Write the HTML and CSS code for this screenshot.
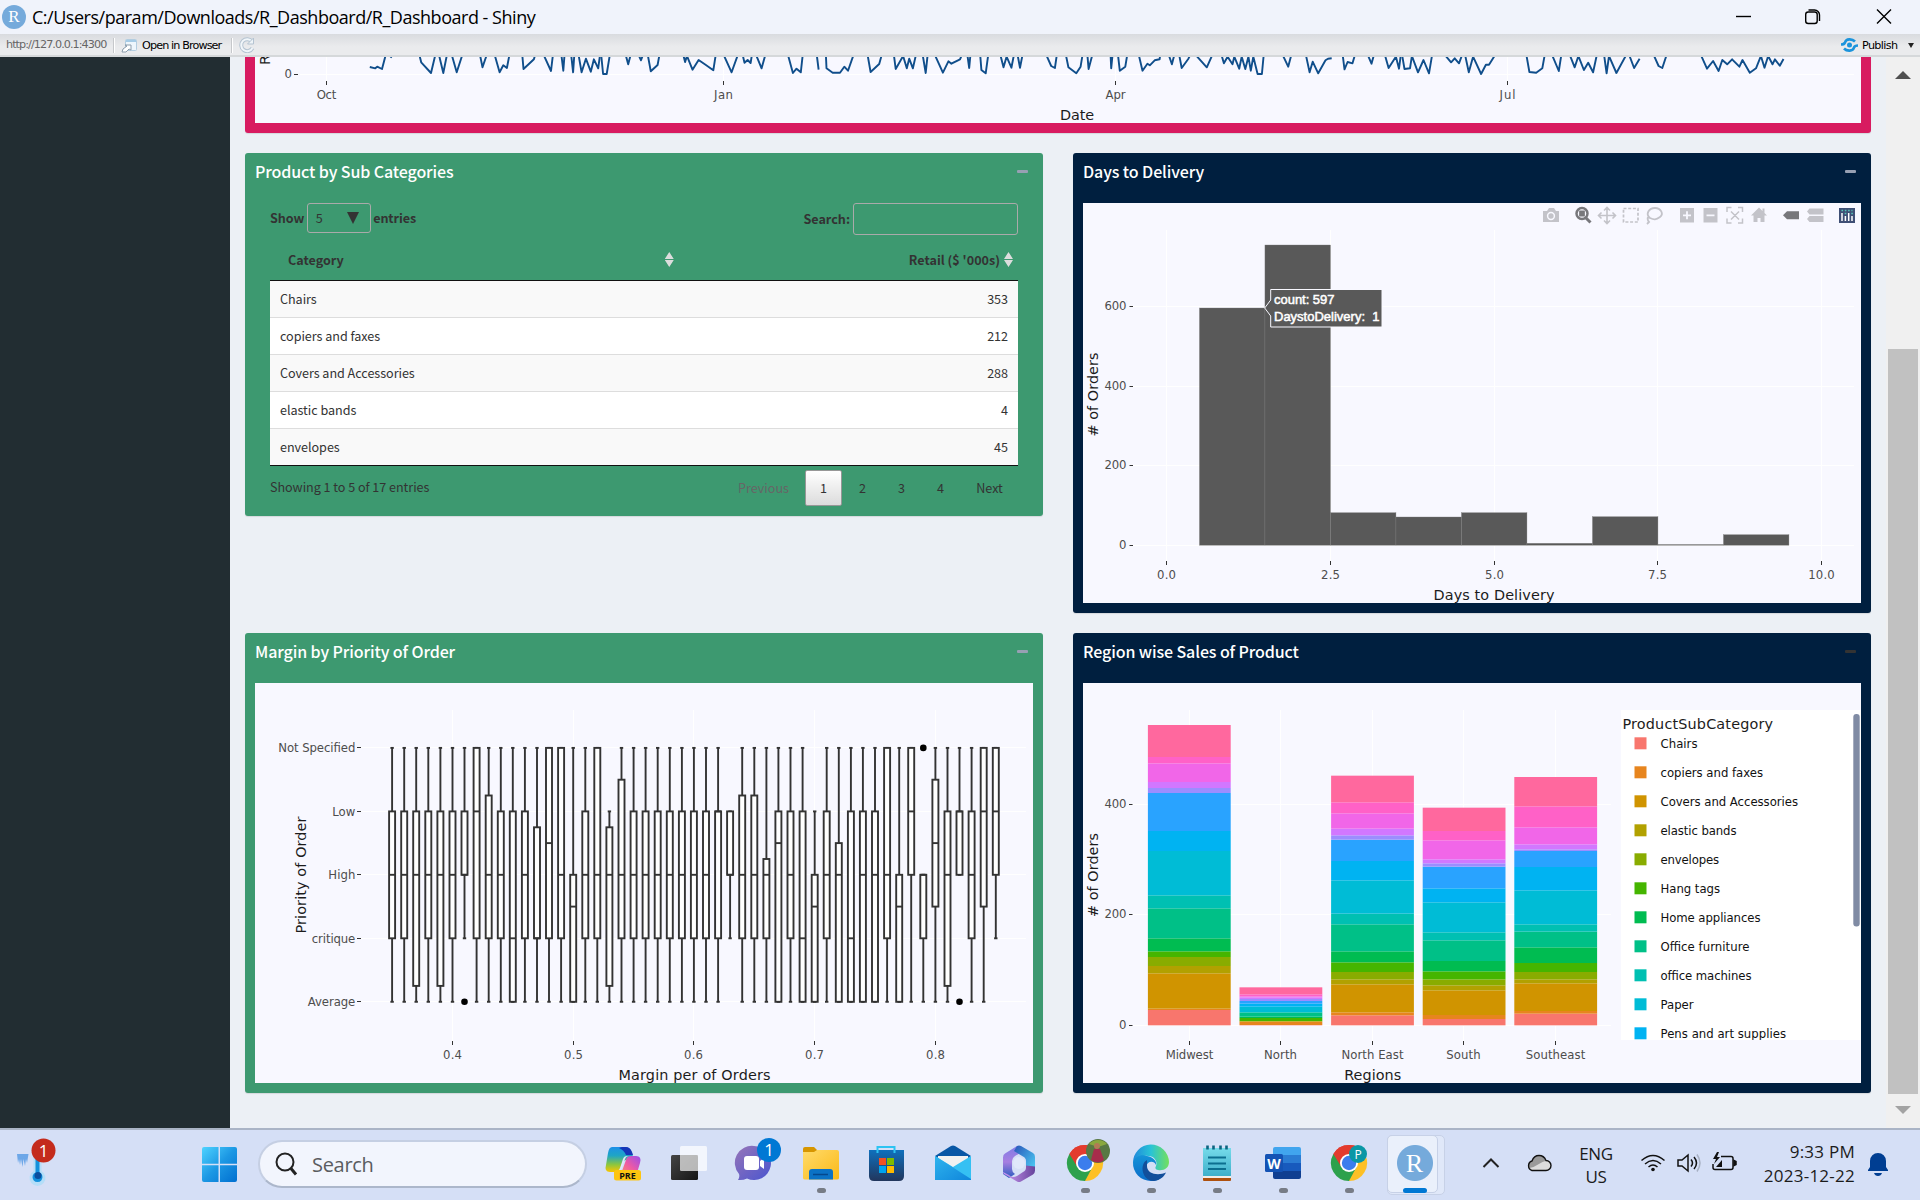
FILE: index.html
```html
<!DOCTYPE html>
<html lang="en">
<head>
<meta charset="utf-8">
<title>R_Dashboard - Shiny</title>
<link rel="stylesheet" href="styles.css">
</head>
<body>
<header class="titlebar">
  <span class="r-logo">R</span>
  <span class="window-title">C:/Users/param/Downloads/R_Dashboard/R_Dashboard - Shiny</span>
  <svg class="window-controls" width="184" height="34" fill="none" stroke="#000" stroke-width="1.4">
    <path d="M0 16.5H15"/>
    <rect x="69.700" y="12" width="11.500" height="11.500" rx="2.500"/><path d="M72.500 10h6a5 5 0 0 1 5 5v6"/>
    <path d="M141 9.500l14 14M155 9.500l-14 14"/>
  </svg>
</header>
<div class="toolbar">
  <span class="address">http://127.0.0.1:4300</span>
  <i class="divider"></i>
  <svg class="open-icon" width="17" height="15"><rect x="4.500" y="1.500" width="11" height="11" rx="1" fill="#eef6fc" stroke="#b3cde0"/><path d="M5 3h10" stroke="#a5cbe6" stroke-width="2"/><path d="M1 14l1-3 4-3-2-1h6v5l-2-1-3 3z" fill="#fff" stroke="#8b9cab"/></svg>
  <span class="open-label">Open in Browser</span>
  <i class="divider"></i>
  <svg class="reload-icon" width="16" height="16" fill="none"><path d="M13 4.500A6 6 0 1 0 13.500 11" stroke="#b4c3d1" stroke-width="4"/><path d="M13 4.500A6 6 0 1 0 13.500 11" stroke="#f1f6fa" stroke-width="2"/><path d="M14.500 1v6h-6z" fill="#eef4f8" stroke="#b4c3d1"/></svg>
  <span class="spacer"></span>
  <svg class="publish-icon" width="17" height="14" fill="none" stroke="#1c94dc" stroke-width="2.600"><path d="M14 3.500C11 .5 5 .5 4 4.500c-.5 1.500-2 2-4 2M3 10.500c3 3 9 3 10-1 .5-1.500 2-2 4-2"/><circle cx="8.500" cy="7" r="2.500" fill="#1c94dc" stroke="none"/></svg>
  <span class="publish-label">Publish</span>
  <i class="caret"></i>
</div>

<main class="viewport">
  <aside class="sidebar"></aside>
  <section class="content">
    <div class="box pink"><svg id="timeline" width="1606" height="66"></svg></div>
    <div class="grid">
      <article class="box green table-box">
        <h3>Product by Sub Categories <i class="collapse"></i></h3>
        <div class="table-wrap">
          <div class="controls">
            <label>Show <span class="select">5 <i></i></span> entries</label>
            <label>Search: <span class="search-input"></span></label>
          </div>
          <div class="thead"><b>Category</b><i class="sort first"></i><b class="retail">Retail ($ '000s)</b><i class="sort"></i></div>
          <div class="tbody">
            <div class="row"><span>Chairs</span><span>353</span></div>
            <div class="row"><span>copiers and faxes</span><span>212</span></div>
            <div class="row"><span>Covers and Accessories</span><span>288</span></div>
            <div class="row"><span>elastic bands</span><span>4</span></div>
            <div class="row"><span>envelopes</span><span>45</span></div>
          </div>
          <div class="footer">
            <span class="info">Showing 1 to 5 of 17 entries</span>
            <nav class="pager"><span class="word disabled">Previous</span><span class="current">1</span><span>2</span><span>3</span><span>4</span><span class="word next">Next</span></nav>
          </div>
        </div>
      </article>
      <article class="box navy">
        <h3>Days to Delivery <i class="collapse"></i></h3>
        <svg id="histogram" class="plot" width="778" height="400"></svg>
      </article>
      <article class="box green">
        <h3>Margin by Priority of Order <i class="collapse"></i></h3>
        <svg id="boxplot" class="plot" width="778" height="400"></svg>
      </article>
      <article class="box navy">
        <h3>Region wise Sales of Product <i class="collapse dark"></i></h3>
        <svg id="stacked" class="plot" width="778" height="400"></svg>
      </article>
    </div>
  </section>
  <div class="scrollbar"><i class="up"></i><i class="thumb"></i><i class="down"></i></div>
</main>

<footer class="taskbar">
  <svg width="0" height="0" class="defs">
    <defs>
      <linearGradient id="win" x1="0" y1="0" x2="1" y2="1"><stop offset="0" stop-color="#4fd3ff"/><stop offset=".5" stop-color="#1c98e4"/><stop offset="1" stop-color="#006fd0"/></linearGradient>
      <linearGradient id="cpA" x1="0" y1="0" x2="0" y2="1"><stop offset="0" stop-color="#1c8fe8"/><stop offset=".35" stop-color="#1fa6c4"/><stop offset=".7" stop-color="#8bc63f"/><stop offset="1" stop-color="#fbc500"/></linearGradient>
      <linearGradient id="cpB" x1="1" y1="0" x2="0" y2="1"><stop offset="0" stop-color="#9a4dea"/><stop offset=".5" stop-color="#ee5aa4"/><stop offset="1" stop-color="#ff9a5c"/></linearGradient>
      <linearGradient id="dark" x1="0" y1="0" x2="1" y2="1"><stop offset="0" stop-color="#444"/><stop offset="1" stop-color="#161616"/></linearGradient>
      <linearGradient id="chat" x1="0" y1="0" x2="1" y2="1"><stop offset="0" stop-color="#9775b8"/><stop offset="1" stop-color="#4a55cf"/></linearGradient>
      <linearGradient id="fold" x1="0" y1="0" x2="1" y2="1"><stop offset="0" stop-color="#ffdb6b"/><stop offset="1" stop-color="#fbb917"/></linearGradient>
      <linearGradient id="blue" x1="0" y1="0" x2="0" y2="1"><stop offset="0" stop-color="#0f70bd"/><stop offset="1" stop-color="#22365c"/></linearGradient>
      <linearGradient id="mail" x1="0" y1="0" x2="1" y2="1"><stop offset="0" stop-color="#2fb4ee"/><stop offset="1" stop-color="#0f86db"/></linearGradient>
      <linearGradient id="edgeTop" x1="0" y1="0" x2="1" y2="0"><stop offset="0" stop-color="#2089dc"/><stop offset=".5" stop-color="#29c3d6"/><stop offset="1" stop-color="#74e05c"/></linearGradient>
      <linearGradient id="edgeLeft" x1="0" y1="0" x2="0" y2="1"><stop offset="0" stop-color="#1593d8"/><stop offset="1" stop-color="#0b6cc8"/></linearGradient>
      <linearGradient id="note" x1="0" y1="0" x2="0" y2="1"><stop offset="0" stop-color="#76dbea"/><stop offset="1" stop-color="#3fb0cb"/></linearGradient>
      <linearGradient id="mA" x1="0" y1="0" x2="0" y2="1"><stop offset="0" stop-color="#7f7ce6"/><stop offset=".5" stop-color="#a77fe0"/><stop offset="1" stop-color="#2a5cc0"/></linearGradient>
      <linearGradient id="mB" x1="0" y1="0" x2="1" y2="1"><stop offset="0" stop-color="#2a55b8"/><stop offset="1" stop-color="#4fd8fb"/></linearGradient>
      <linearGradient id="mC" x1="0" y1="0" x2="1" y2="0"><stop offset="0" stop-color="#cf9bf5"/><stop offset="1" stop-color="#67449c"/></linearGradient>
      <g id="chrome">
        <path d="M0 0L-15.600-9A18 18 0 0 1 15.600-9z" fill="#e33b2e"/>
        <path d="M0 0L-15.600-9A18 18 0 0 0 0 18z" fill="#2da14c"/>
        <path d="M0 0L15.600-9A18 18 0 0 1 0 18z" fill="#fdc026"/>
        <path d="M0-8.500H15.600L7.400 4.200z" fill="#fdc026"/><path d="M-7.400 4.200L-15.600-9 0-8.500z" fill="#2da14c"/><path d="M0-8.700H15.800A18 18 0 0 0-15.600-9L-7.500 4.200z" fill="#e33b2e"/><path d="M7.400 4.200L0 18 -8 3z" fill="#2da14c"/>
        <circle r="9" fill="#fff"/><circle r="7.200" fill="#3b7ded"/>
      </g>
    </defs>
  </svg>
  <svg class="weather" width="50" height="72">
    <path d="M9 24h11.500l-1.500 9-1-4-1 7-1.500-7-1 8-1.500-8-1 6-1-6-1 4z" fill="#6da7e8"/>
    <path d="M25.500 26v15a8 8 0 1 0 8 0V26a4 4 0 0 0-8 0z" fill="#b5def8"/><path d="M27.500 26v16.500a5 5 0 1 0 4 0V26z" fill="#1491dc"/><circle cx="30" cy="45.500" r="3.500" fill="#0a4f9e"/>
    <circle cx="35.500" cy="20.500" r="12" fill="#c42b1c"/><text x="35.500" y="26.500" text-anchor="middle" class="badge-text">1</text>
  </svg>
  <svg class="start" width="35" height="35" fill="url(#win)"><path d="M2 0h14.500v16.700H0V2a2 2 0 0 1 2-2zM18 0h15a2 2 0 0 1 2 2v14.700H18zM0 18.300h16.500V35H2a2 2 0 0 1-2-2zM18 18.300h17V33a2 2 0 0 1-2 2H18z"/></svg>
  <div class="search"><svg width="24" height="24" fill="none" stroke="#222"><circle cx="11" cy="10" r="8.500" stroke-width="2"/><path d="M17 16.500l5 6" stroke-width="3"/></svg><span>Search</span></div>
  <div class="apps">
    <div class="app"><svg width="66" height="70">
      <path d="M22 17h13q5 0 7 6l2 7h-7q-4 0-5 4l-2 6q-1 2-4 2h-6q-6 0-4-7l2-12q1-6 4-6z" fill="url(#cpA)"/><path d="M32 17h4q4 0 6 5l1 3h-7q-2-5-7-7z" fill="#1536b8"/>
      <path d="M36 30q1-4 5-4h5q6 0 4 7l-3 10q-1 3-4 3H29l3-5z" fill="url(#cpB)"/><path d="M31 40l4-11q1-3 4-3h-2q-3 0-4 3l-3 9q-1 3-4 3h4z" fill="#dfe5ff"/>
      <rect x="24" y="40" width="27" height="10.500" rx="2.500" fill="#fdc510"/><text x="37.500" y="48.700" text-anchor="middle" class="pre">PRE</text></svg></div>
    <div class="app"><svg width="66" height="70"><rect x="15" y="25" width="27" height="25" rx="1.500" fill="url(#dark)"/><rect x="24" y="16" width="27" height="25" rx="1.500" fill="#fff" fill-opacity=".72"/><path d="M24 25h18v16H25.500L24 40z" fill="#aaa" fill-opacity=".35"/></svg></div>
    <div class="app"><svg width="66" height="70"><path d="M32 16a17 17 0 1 1-7 32.500q-4 2-9 1.500 2-3 1-6A17 17 0 0 1 32 16z" fill="url(#chat)"/><rect x="22" y="26" width="15" height="14" rx="3" fill="#fff"/><path d="M38 31l4-3v11l-4-3z" fill="#fff"/><circle cx="47" cy="20" r="12" fill="#0078d4"/><text x="47" y="26" text-anchor="middle" class="badge-text">1</text></svg></div>
    <div class="app running"><svg width="66" height="70"><path d="M15 19q0-2 2-2h9l3 3v5H15z" fill="#d79600"/><path d="M15 22h11l3-2h20q2 0 2 2v26q0 1.500-2 1.500H17q-2 0-2-1.500z" fill="url(#fold)"/><path d="M21 49.500V42q0-3 3-3h18q3 0 3 3v7.500z" fill="#0b72c5"/><path d="M25 44.500h15" stroke="#05488c" stroke-width="1.500"/></svg></div>
    <div class="app"><svg width="66" height="70"><path d="M23.500 23v-6h17v6" fill="none" stroke="#2cc3f2" stroke-width="2"/><path d="M15 20h35v26q0 5-5 5H20q-5 0-5-5z" fill="url(#blue)"/><path d="M23.500 20v3M40.500 20v3" stroke="#2cc3f2" stroke-width="2"/><path d="M25 28h7v7h-7z" fill="#f25022"/><path d="M33 28h7v7h-7z" fill="#7fba00"/><path d="M25 36h7v7h-7z" fill="#00a4ef"/><path d="M33 36h7v7h-7z" fill="#ffb900"/></svg></div>
    <div class="app"><svg width="66" height="70"><path d="M15 26L31 16q2-1 4 0l16 10-18 13z" fill="#0957a5"/><path d="M18 26h30v6L33 42 18 32z" fill="#f1f1f1"/><path d="M15 26l18 11 18-11v24H15z" fill="#35c0f3"/><path d="M15 26l36 23v1H15z" fill="url(#mail)"/></svg></div>
    <div class="app"><svg width="66" height="70">
      <path d="M31 16L19 23.500q-2 1-2 4V44l6 4 6-4q-3-2-3-5V31q0-3 3-5l7-4z" fill="url(#mA)"/>
      <path d="M31 16q2-1 4 0l12 7q2 1 2 4v14l-5 3-4-3V31q0-3-3-4.500L28 21z" fill="url(#mB)"/>
      <path d="M17 42q0 1.500 2 2.500l12 7q2 1 4 0l12-7q2-1.500 2-4v-4l-9-1v2q0 3-3 4.500L31 46q-5 2.500-8-1z" fill="url(#mC)"/>
      <circle cx="33" cy="33" r="6" fill="#e0e8fa"/></svg></div>
    <div class="app running"><svg width="66" height="70"><use href="#chrome" x="33" y="33"/><circle cx="46" cy="21" r="12" fill="#587843"/><path d="M37 14a12 12 0 0 1 18 0l-9 3z" fill="#89a83e"/><circle cx="45" cy="16" r="3" fill="#b27a55"/><path d="M39 30l3-11h6l4 11q-6 5-13 0z" fill="#a82c4b"/></svg></div>
    <div class="app running"><svg width="66" height="70"><path d="M15 33a18 18 0 0 1 36-1c0 6-5 9-11 8q-4-1-2-4c2-5-2-10-8-10-6-1-13 2-15 7z" fill="url(#edgeTop)"/><path d="M15 32c2-6 9-8 14-6 6 1 10 5 9 9-2-5-9-4-10 2-1 8 6 12 16 10-4 4-8 4-11 4a18 18 0 0 1-18-19z" fill="url(#edgeLeft)"/><path d="M29 30c-8 4-5 21 7 21 6-1 10-4 12-8.500-8 3.500-19 1.500-19-6.500z" fill="#124f9b"/></svg></div>
    <div class="app running"><svg width="66" height="70"><path d="M19 46h28v3H19z" fill="#f3eee8"/><path d="M19 48h28v2q0 1-1 1H20q-1 0-1-1z" fill="#ae510f"/><path d="M19 18h28v28H19z" fill="url(#note)"/><path d="M24 27.500h18M24 33.500h18M24 39h18" stroke="#0c6f8f" stroke-width="1.800"/><path d="M23.500 15.500v4M29.500 15.500v4M36.500 15.500v4M42.500 15.500v4" stroke="#0c6480" stroke-width="2.600"/></svg></div>
    <div class="app running"><svg width="66" height="70"><path d="M23 19q0-2 2-2h24q2 0 2 2v6H23z" fill="#41a5ee"/><path d="M23 25h28v8H23z" fill="#2b7cd3"/><path d="M23 33h28v8H23z" fill="#185abd"/><path d="M23 41h28v6q0 2-2 2H25q-2 0-2-2z" fill="#103f91"/><rect x="15" y="24" width="18" height="18" rx="1.500" fill="#1453b4"/><text x="24" y="38.500" text-anchor="middle" class="word-w">W</text></svg></div>
    <div class="app running"><svg width="66" height="70"><use href="#chrome" x="33" y="33"/><circle cx="42" cy="24" r="9" fill="#0a97a5"/><text x="42" y="28.500" text-anchor="middle" class="profile-p">P</text></svg></div>
    <div class="app active"><span class="r-logo large">R</span></div>
  </div>
  <div class="tray">
    <svg class="chevron" width="18" height="12" fill="none" stroke="#222" stroke-width="2"><path d="M1.500 10L9 2.500 16.500 10"/></svg>
    <svg class="cloud" width="26" height="18"><path d="M6 16.500a5 5 0 0 1 0-9.500Q8 1.500 13 1.500t7 5a5 5 0 0 1 0 10z" fill="#dcdcdc" stroke="none"/><path d="M6 7.500Q8 2 13 2t6.500 5l-3 1-9 5-4 1Q1 9 6 7.500z" fill="#9a9a9a"/><path d="M6 16.500a5 5 0 0 1 0-9.500Q8 1.500 13 1.500t7 5a5 5 0 0 1 0 10z" fill="none" stroke="#111" stroke-width="1.400"/></svg>
    <div class="lang">ENG<br>US</div>
    <svg class="wifi" width="26" height="18" fill="none" stroke="#111" stroke-width="1.500"><path d="M1.500 6.500Q13-3.500 24.500 6.500M5 10Q13 3 21 10M8.500 13Q13 9 17.500 13"/><circle cx="13" cy="15.500" r="1.800" fill="#111" stroke="none"/></svg>
    <svg class="speaker" width="25" height="20" fill="none" stroke="#111" stroke-width="1.500"><path d="M1 7h4l6-5v16l-6-5H1zM14 6.500q3 3.500 0 7M17 4q5 6 0 12"/><path d="M20 1.500q6 8.500 0 17" stroke="#a7b0c3"/></svg>
    <svg class="battery" width="26" height="20" fill="none" stroke="#111" stroke-width="1.500"><path d="M9 4.500h10q2 0 2 2v9q0 2-2 2H3q-2 0-2-2V12"/><path d="M22 8.500v5l2-1v-3z" fill="#111"/><path d="M4 15l6-7v7z" fill="#111" stroke="none"/><path d="M5 0L1 7h3L2 12l6-7H5l2-5z" fill="#111" stroke="none"/></svg>
    <div class="clock">9:33 PM<br>2023-12-22</div>
    <svg class="bell" width="20" height="24" fill="#003e92"><path d="M10 0a8 8 0 0 1 8 8v6l2 3v1H0v-1l2-3V8a8 8 0 0 1 8-8zM6 20h8q-1 3-4 3t-4-3z"/></svg>
  </div>
</footer>
<script src="script.js"></script>
</body>
</html>
```
FILE: styles.css
```css
* { box-sizing: border-box; }
body { margin: 0; width: 1920px; height: 1200px; overflow: hidden; display: flex; flex-direction: column; background: #ebeef4; font-family: "Noto Sans CJK SC", sans-serif; color: #333; }
svg { display: block; flex: none; }

.titlebar { height: 34px; flex: none; display: flex; align-items: center; padding-left: 2px; background: #f0f3fb; }
.r-logo { width: 24px; height: 24px; flex: none; border-radius: 50%; background: #75aadb; color: #fff; font: 17px/24px "Liberation Serif", serif; text-align: center; }
.window-title { margin-left: 6px; font: 18px/34px "Open Sans", sans-serif; letter-spacing: -.48px; color: #000; white-space: nowrap; }
.window-controls { margin-left: auto; }

.toolbar { height: 23px; flex: none; display: flex; align-items: center; padding: 1px 6px 0 6px; background: linear-gradient(#d9dbdf, #eaebed 60%); border-bottom: 2px solid #d5d8da; font: 11.200px/20px "DejaVu Sans", sans-serif; letter-spacing: -.88px; color: #000; white-space: nowrap; }
.address { width: 107px; color: #666; letter-spacing: -.93px; }
.divider { width: 2px; height: 15px; background: #c6c8cb; border-right: 1px solid #fff; }
.open-icon { margin-left: 6px; }
.open-label { width: 89px; margin-left: 4px; padding-top: 1px; }
.reload-icon { margin-left: 6px; }
.spacer { flex: 1; }
.publish-label { margin-left: 4px; width: 46px; padding-top: 2px; letter-spacing: -.65px; }
.caret { border: 3px solid transparent; border-top: 5px solid #222; border-bottom: 0; }

.viewport { height: 1071px; flex: none; display: flex; overflow: hidden; }
.sidebar { width: 230px; background: #222d32; }
.content { width: 1656px; padding: 0 15px; background: #ecf0f5; }
.box { border-radius: 3px; padding: 0 10px 10px; box-shadow: 0 1px 1px rgba(0,0,0,.1); }
.pink { background: #d81b60; height: 76px; border-radius: 0 0 3px 3px; margin-bottom: 20px; }
#timeline, .plot { background: #f8f8ff; overflow: hidden; }
.grid { display: grid; grid-template-columns: 798px 798px; grid-template-rows: 460px 460px; gap: 20px 30px; }
.green { background: #3d9970; }
.navy { background: #001f3f; }
.table-box { height: 363px; }
h3 { margin: 0; height: 50px; padding: 0 5px 14px 0; display: flex; align-items: center; justify-content: space-between; font-size: 16px; line-height: 36px; font-weight: 500; letter-spacing: -.1px; color: #fff; }
.collapse { width: 11px; height: 3px; background: #97a0b3; border-radius: 1px; }
.dark { background: #333; }

.table-wrap { padding: 0 15px; font-size: 12.600px; }
.controls { height: 32px; display: flex; justify-content: space-between; font-weight: 700; }
.controls label { display: flex; align-items: center; gap: 3px; height: 32px; line-height: 30px; }
.controls label:first-child { height: 30px; line-height: 28px; letter-spacing: -.1px; gap: 2.500px; }
.select { width: 64px; height: 30px; border: 1px solid #aaa; border-radius: 3px; padding: 0 11px 0 8px; display: flex; align-items: center; justify-content: space-between; font-weight: 400; }
.select i { border: 6px solid transparent; border-top: 12px solid #333; border-bottom: 0; }
.search-input { width: 165px; height: 32px; border: 1px solid #aaa; border-radius: 3px; }
.thead { height: 46px; display: flex; align-items: center; padding: 4px 5px 0 18px; border-bottom: 1px solid #111; }
.retail { margin-left: auto; margin-right: 4px; }
.sort { width: 9px; height: 15px; background: linear-gradient(#ddd, #ddd); clip-path: polygon(50% 0, 100% 46%, 0 46%, 0 54%, 100% 54%, 50% 100%, 0 54%, 0 46%); }
.first { margin-left: 321px; }
.tbody { border-bottom: 1px solid #111; }
.row { height: 37px; padding: 0 10px 2px; display: flex; align-items: center; justify-content: space-between; background: #fff; border-top: 1px solid #ddd; letter-spacing: -.04px; }
.row:first-child { border-top: 0; height: 36px; }
.row:nth-child(odd) { background: #f9f9f9; }
.footer { display: flex; justify-content: space-between; height: 45px; }
.info { line-height: 41px; letter-spacing: -.04px; }
.pager { display: flex; gap: 2px; padding-top: 4px; line-height: 34px; }
.pager span { width: 37px; height: 36px; border: 1px solid transparent; text-align: center; }
.pager .word { width: 79px; color: #666; }
.pager .next { width: 57px; color: #333; }
.pager .current { border-color: #979797; border-radius: 2px; background: linear-gradient(#fff, #dcdcdc); }

.scrollbar { width: 34px; background: #f0f0f0; display: flex; flex-direction: column; align-items: center; }
.up, .down { border: 8px solid transparent; flex: none; }
.up { margin-top: 14px; border-top: 0; border-bottom-color: #505050; }
.thumb { width: 30px; height: 745px; margin-top: 270px; background: #c1c1c1; }
.down { margin-top: 12px; border-bottom: 0; border-top-color: #a3a3a3; }

text { font-family: "DejaVu Sans", sans-serif; }
.tick { font-size: 11.700px; fill: #4d4d4d; }
.axis { font-size: 14.400px; fill: #1c1c1c; }
.legend { font-size: 11.700px; fill: #111; }
.hover { font: 13px "Liberation Sans", Arial, sans-serif; fill: #fff; stroke: #fff; stroke-width: .5px; }

.taskbar { height: 72px; flex: none; display: flex; align-items: flex-start; position: relative; background: #d5dff6; border-top: 2px solid #aab4c6; font-family: "Open Sans", sans-serif; color: #1b1b1b; }
.defs { position: absolute; }
.weather { margin-left: 8px; }
.start { margin: 17px 0 0 144px; }
.search { width: 329px; height: 48px; margin: 10px 0 0 21px; border-radius: 24px; background: #f2f5fd; border: 2px solid #c5cfe3; border-bottom-color: #acb7cb; display: flex; align-items: center; padding-left: 14px; font-size: 20px; color: #5a5c60; }
.search span { margin-left: 14px; letter-spacing: -.3px; }
.apps { display: flex; margin-left: 3px; }
.app { width: 66px; height: 70px; position: relative; }
.running::after { content: ""; position: absolute; left: 29px; top: 58px; width: 9px; height: 5px; border-radius: 3px; background: #777c86; }
.active { padding: 5px 0 0 5px; }
.active::before { content: ""; position: absolute; left: 5px; top: 5px; width: 56px; height: 58px; border-radius: 5px; background: #e0e8f9; border: 1px solid #c7d1e7; }
.active::after { content: ""; position: absolute; left: 21px; top: 58px; width: 24px; height: 5px; border-radius: 3px; background: #0078d4; }
.large { display: block; position: relative; width: 51px; height: 58px; border: 1px solid #c7d1e7; border-radius: 5px; font-size: 26px; line-height: 55px; background: radial-gradient(circle at 27px 27px, #75aadb 17.500px, #eaf0fb 18.500px); text-indent: 4px; }
.badge-text { font: 17px "Open Sans", sans-serif; fill: #fff; }
.pre { font: 700 9px "Open Sans", sans-serif; fill: #111; }
.word-w { font: 700 14px "Open Sans", sans-serif; fill: #fff; }
.profile-p { font: 12px "Open Sans", sans-serif; fill: #fff; }
.tray { display: flex; padding-left: 34px; font-size: 17px; line-height: 24px; letter-spacing: -.3px; }
.chevron { margin-top: 27px; }
.cloud { margin: 24px 0 0 26px; }
.lang { width: 50px; margin: 12px 0 0 19px; text-align: center; line-height: 23px; }
.wifi { margin: 24px 0 0 19px; }
.speaker { margin: 23px 0 0 11px; }
.battery { margin: 22px 0 0 10px; }
.clock { width: 117px; margin-top: 10px; text-align: right; white-space: nowrap; letter-spacing: .25px; }
.bell { margin: 23px 0 0 13px; }
```
FILE: script.js
```js
const line = (x1, y1, x2, y2, c = '#fff', w = 1) => `<path d="M${x1} ${y1}L${x2} ${y2}" stroke="${c}" stroke-width="${w}" fill="none"/>`;
const rect = (x, y, w, h, fill, extra = '') => `<rect x="${x}" y="${y}" width="${w}" height="${h}" fill="${fill}" ${extra}/>`;
const label = (x, y, s, len, cls = 'tick', anchor = 'middle', extra = '') =>
  `<text x="${x}" y="${y}" class="${cls}" text-anchor="${anchor}" ${len ? `textLength="${len}"` : ''} ${extra}>${s}</text>`;
const vertical = (x, y, s, len) => label(x, y, s, len, 'axis', 'middle', `transform="rotate(-90 ${x} ${y})"`);
const draw = (id, s) => { document.getElementById(id).innerHTML = s; };

/* Retail over time: only the foot of each dip is visible above the zero line */
const dips = `604,201 613,205 616,200 624,207 630,165|638,173 641,165|685,165 688,187 704,219 711,165|717,165 724,219 730,165|738,165 746,217 755,165|784,165 788,202 795,165|808,165 816,217 822,196 828,204 832,165|853,165 855,207 872,178 874,165|888,165 900,213 903,165|917,165 920,212 922,165|933,165 936,217 938,165|945,165 950,217 957,176 965,215 970,178 977,205 980,165|982,165 985,222 991,222 996,165|1022,165 1026,193 1030,165|1043,165 1047,181 1050,165|1058,165 1063,214 1074,195 1077,165|1116,165 1119,186 1122,168 1131,209 1141,180 1153,195 1165,211 1169,165|1182,165 1195,217 1205,165|1213,165 1216,188 1221,180 1226,189 1228,165|1235,165 1244,205 1250,165|1287,165 1295,219 1301,206 1308,217 1311,165|1334,165 1337,209|1349,165 1350,205 1360,218 1372,218 1379,200 1385,212 1394,165|1417,165 1422,216 1436,192 1440,165|1460,165 1463,207 1475,168 1481,205 1485,176 1491,205 1496,165|1507,165 1512,219 1515,165|1527,165 1540,218 1549,184 1554,191 1568,178 1571,165|1580,165 1583,204 1585,165|1601,165 1603,210 1610,220 1614,165|1634,165 1639,202 1644,170 1652,203 1656,165|1662,165 1666,203 1670,165|1709,165 1717,198 1723,204 1726,165|1741,165 1745,202 1758,220 1765,200 1768,165|1776,165 1778,207 1784,165|1814,165 1815,205 1817,165|1826,165 1829,212 1838,200 1841,165|1860,165 1866,212 1874,191 1878,196 1886,181 1894,178 1895,165|1909,165 1914,193 1918,165|1926,165 1930,204 1941,176 1944,165|1953,165 1971,202 1980,165|1995,165 1999,190 2005,170 2013,193 2016,170 2024,206 2028,170 2034,207 2039,170 2043,212 2047,170 2054,222 2061,222 2064,165|2095,165 2104,200 2109,165|2133,165 2139,217 2144,185 2153,220 2165,181 2169,176 2175,175|2193,165 2196,208 2201,186 2209,190 2213,165|2234,165 2240,191 2244,165|2262,165 2268,204 2280,170 2285,206 2288,165|2290,165 2294,207 2303,205 2306,168 2316,217 2325,180 2334,220 2339,165|2360,165 2370,187 2376,175 2383,190 2388,165|2393,165 2399,217 2406,170 2419,222 2427,194 2432,194 2442,165|2493,165 2498,216 2509,218 2519,205 2523,165|2535,165 2546,213 2550,165|2564,165 2572,202 2578,168 2587,210 2594,188 2602,217 2608,165|2620,165 2624,220 2628,168 2640,219 2656,165|2661,165 2669,204 2678,176|2701,165 2709,198 2715,204 2722,165|2778,165 2788,206 2798,183 2807,213 2813,180 2821,193 2829,178 2841,200 2846,180 2858,218 2868,205 2876,168 2882,203 2888,168 2895,193 2899,178 2907,197 2913,177`;
const months = [[71.500, 'Oct', 19.500], [468.500, 'Jan', 19], [860.500, 'Apr', 20], [1252.500, 'Jul', 16]];
draw('timeline',
  line(45, 17.500, 1599, 17.500) +
  months.map(([x, m, w]) => line(x, 0, x, 24) + line(x, 24, x, 28, '#333') + label(x, 42, m, w)).join('') +
  line(39, 17.500, 43, 17.500, '#333') + label(37, 21, '0', 7.500, 'tick', 'end') +
  label(822, 62.500, 'Date', 34, 'axis') +
  `<text class="axis" transform="translate(14.500 8) rotate(-90)">R</text>` +
  dips.split('|').map(seg => `<polyline fill="none" stroke="#104e8b" stroke-width="1.9" stroke-linejoin="round" points="${
    seg.split(' ').map(p => { const [a, b] = p.split(',').map(Number); return (a / 1.6333 - 255).toFixed(1) + ',' + (b / 3 - 57).toFixed(1); }).join(' ')}"/>`).join(''));

/* Days to Delivery */
const hx = v => 83.700 + 65.500 * v;
const tops = [105, 42, 309.700, 314, 309.700, 340.300, 313.700, 341.500, 331.700];
const gray = 'fill="#c3c3c9"';
const modebar = `
<g ${gray}><path d="M460 8h4l2-3h5l2 3h3v11h-16z"/></g><circle cx="468" cy="13" r="3.400" fill="none" stroke="#f8f8ff" stroke-width="1.500"/>
<g stroke="#77777b" fill="none"><circle cx="499" cy="10.500" r="5.500" stroke-width="2.500"/><path d="M503 15l4.500 4.500" stroke-width="3"/><rect x="496.700" y="8" width="4.600" height="5" fill="#77777b"/></g>
<path d="M516 12.500h16M524 4.500v16M518.500 9.500l-3 3 3 3M529.500 9.500l3 3-3 3M521 7.500l3-3 3 3M521 17.500l3 3 3-3" stroke="#c3c3c9" stroke-width="1.600" fill="none"/>
<rect x="540.500" y="5.500" width="14.500" height="13.500" fill="none" stroke="#c3c3c9" stroke-width="1.700" stroke-dasharray="3 1.700"/>
<path d="M567 15c-5-4-1-10 5-10s9 6 5 9-6 3-10 1-2 3-1 4l-2 2" stroke="#c3c3c9" stroke-width="1.800" fill="none"/>
<g ${gray}><path d="M597 5h14v14.500h-14zM620.500 5h14v14.500h-14z"/></g><path d="M600 12.300h8M604 8.300v8M623.500 12.300h8" stroke="#f8f8ff" stroke-width="1.800"/>
<path d="M644 9V4.500h4.500M655 4.500h4.500V9M659.500 15.500V20H655M648.500 20H644v-4.500M648 8.500l8 8M656 8.500l-8 8" stroke="#c3c3c9" stroke-width="1.500" fill="none"/>
<path d="M668 12.500l8-8 3.500 3.500V5.500h2v4.500l2.500 2.500h-2.500v6.500h-4v-4h-3v4h-4v-6.500z" ${gray}/>
<path d="M700 12.300l4-4h12v8h-12z" fill="#77777b"/>
<path d="M724 8.500l2.500-3h14v6h-14zM724 16l2.500-3h14v6h-14z" ${gray}/>
<rect x="756" y="5" width="16" height="15" fill="#3f4f75"/><path d="M759 10v8M762.400 13v5M765.700 10v8M769 13v5" stroke="#fff" stroke-width="1.500"/><path d="M758.500 7.500h11M761.700 10.500h1.600M768.300 10.500h1.600" stroke="#54c4b8" stroke-width="1.400" stroke-dasharray="1.600 1.700"/>`;
draw('histogram',
  [342.500, 262.500, 183.500, 103.500].map((y, i) => line(50, y, 771, y) + line(46.500, y, 50, y, '#333') + label(43.500, y + 3.500, i * 200, i ? 22 : 7.500, 'tick', 'end')).join('') +
  [0, 2.500, 5, 7.500, 10].map(v => { const x = Math.floor(hx(v)) + .5; return line(x, 27, x, 358) + line(x, 358, x, 362, '#333') + label(x, 376, v.toFixed(1), v > 9 ? 26.500 : 19); }).join('') +
  tops.map((t, i) => rect(hx(i + .5), t, 65.500, 342.200 - t, '#595959', 'stroke="#7d7d7d" stroke-width=".35"')).join('') +
  label(411, 397, 'Days to Delivery', 121, 'axis') + vertical(14.500, 191.500, '# of Orders', 84) + modebar +
  '<path d="M181.700 105l6-8V86.500H299v37.500H187.700V113z" fill="#595959" stroke="#f8f8ff"/>' +
  label(191, 101, 'count: 597', 60.500, 'hover', 'start') + label(191, 118, 'DaystoDelivery:&#160; 1', 105.500, 'hover', 'start'));

/* Margin by Priority: [low whisker, q1, median, q3, high whisker, outlier?] for margins 0.35 .. 0.85 */
const S = [1, 2, 3, 4, 5], lowQ = [1, 1.25, 3, 4, 5];
const boxes = [S, S, lowQ, S, lowQ, S, [2, 3, 3, 4, 5, 1], [1, 2, 4, 5, 5], [1, 2, 3, 4.25, 5], S, [1, 1, 2, 4, 5], S, [1, 2, 2, 3.75, 5],
  [1, 2, 3.5, 5, 5], [1, 2, 3, 5, 5], [1, 1, 2.5, 3, 5], S, [1, 2, 3, 5, 5], [1, 1.25, 3, 3.75, 4], [1, 2, 3, 4.5, 5], S, S, S, S, S, S, S,
  [1, 2, 4, 4, 5], [2, 3, 3, 4, 4], [1, 2, 3, 4.25, 5], [1, 2, 3, 4.25, 5], [1, 2, 3, 3.25, 5], [1, 1, 3.5, 4, 5], S, [1, 1, 2, 4, 5],
  [1, 1, 2.5, 3, 4], S, [1, 1, 3, 3.5, 5], [1, 1, 2, 4, 5], [1, 1, 3, 4, 5], [1, 1, 3, 4, 5], [1, 2, 3, 5, 5], [1, 1, 2.5, 3, 5],
  [1, 3, 4, 5, 5], [1, 2, 3, 3, 3, 5], [1, 2.5, 3.5, 4.5, 5], lowQ, [3, 3, 4, 4, 5, 1], S, [1, 2.5, 4, 5, 5], [2, 3, 4, 5, 5]];
const by = v => +(382.200 - 63.450 * v).toFixed(1);
draw('boxplot',
  [['Average', 47.500], ['critique', 43.500], ['High', 27], ['Low', 23], ['Not Specified', 77]].map(([s, w], i) => {
    const y = Math.floor(by(i + 1)) + .5; return line(106, y, 771, y) + line(102, y, 106, y, '#333') + label(100.300, y + 4.400, s, w, 'tick', 'end'); }).join('') +
  [.4, .5, .6, .7, .8].map((v, i) => { const x = Math.floor(197.400 + i * 120.730) + .5; return line(x, 27, x, 358) + line(x, 358, x, 362, '#333') + label(x, 376, v, 19); }).join('') +
  boxes.map(([lo, q1, m, q3, hi, out], i) => {
    const x = +(137.100 + 12.073 * i).toFixed(1), c = '#333';
    return line(x, by(lo), x, by(q1), c, 1.900) + line(x, by(q3), x, by(hi), c, 1.900) +
      line(x - 1.700, by(lo), x + 1.700, by(lo), c, 1.900) + line(x - 1.700, by(hi), x + 1.700, by(hi), c, 1.900) +
      rect(x - 3, by(q3), 6, by(q1) - by(q3), '#fff', 'stroke="#333" stroke-width="1.9"') + line(x - 3, by(m), x + 3, by(m), c, 1.900) +
      (out ? `<circle cx="${x}" cy="${by(out)}" r="3.300" fill="#000"/>` : '');
  }).join('') +
  label(439.500, 397, 'Margin per of Orders', 152, 'axis') + vertical(50.500, 192, 'Priority of Order', 117));

/* Region wise Sales */
const palette = ['#f8766d', '#e7851e', '#d09400', '#b2a100', '#89ac00', '#45b500', '#00bc51', '#00c087', '#00c0b2', '#00bcd6', '#00b3f2', '#29a3ff', '#9c8dff', '#d277ff', '#f166e8', '#ff61c7', '#ff689e'];
const regions = [
  ['Midwest', 47.500, [1186, 1140, 1136, 1030, 1008, 981, 964, 925, 835, 796, 663, 603, 489, 474, 456, 400, 381, 285]],
  ['North', 33, [1186, 1185, 1176, 1174, 1173.500, 1173, 1164, 1160, 1148, 1146, 1130, 1121, 1113, 1107, 1102, 1099, 1093, 1072]],
  ['North East', 62, [1186, 1156, 1147, 1063, 1048, 1026, 997, 964, 883, 851, 751, 693, 629, 616, 596, 550, 517, 437]],
  ['South', 34.500, [1186, 1167, 1155, 1081, 1066, 1048, 1024, 993, 931, 907, 817, 775, 710, 700, 688, 631, 603, 533]],
  ['Southeast', 59.500, [1186, 1151, 1143, 1060, 1048, 1026, 999, 952, 905, 883, 781, 711, 663, 658, 643, 592, 529, 441]]];
const items = [['Chairs', 37], ['copiers and faxes', 102.500], ['Covers and Accessories', 137.500], ['elastic bands', 76], ['envelopes', 58.500], ['Hang tags', 59.500], ['Home appliances', 100], ['Office furniture', 89], ['office machines', 91], ['Paper', 33], ['Pens and art supplies', 125.500]];
draw('stacked',
  [342.500, 231.500, 121.500].map((y, i) => line(50, y, 528, y) + line(46, y, 49.500, y, '#333') + label(43.500, y + 3.500, i * 200, i ? 22 : 7.500, 'tick', 'end')).join('') +
  regions.map(([s, w, e], i) => {
    const c = 106.200 + 91.600 * i, x = Math.floor(c) + .5;
    return line(x, 27, x, 358) + line(x, 358, x, 362, '#333') + label(x, 376, s, w) +
      palette.map((col, k) => { const b = e[k] / 3 - 53, t = e[k + 1] / 3 - 53; return rect((c - 41.300).toFixed(1), t.toFixed(2), 82.800, (b - t).toFixed(2), col); }).join('');
  }).join('') +
  label(289.700, 397, 'Regions', 57, 'axis') + vertical(14.500, 192, '# of Orders', 84) +
  rect(538, 27, 240, 330, '#fff') + label(539.500, 46.200, 'ProductSubCategory', 150.500, 'axis', 'start') +
  '<clipPath id="legendClip"><rect x="538" y="27" width="240" height="330"/></clipPath><g clip-path="url(#legendClip)">' +
  items.map(([s, w], i) => rect(551.500, 54.300 + 29 * i, 12, 12, palette[i]) + label(577.500, 64.800 + 29 * i, s, w, 'legend', 'start')).join('') + '</g>' +
  rect(770.300, 31, 6.400, 212.500, '#808ba4', 'rx="3"'));
```
